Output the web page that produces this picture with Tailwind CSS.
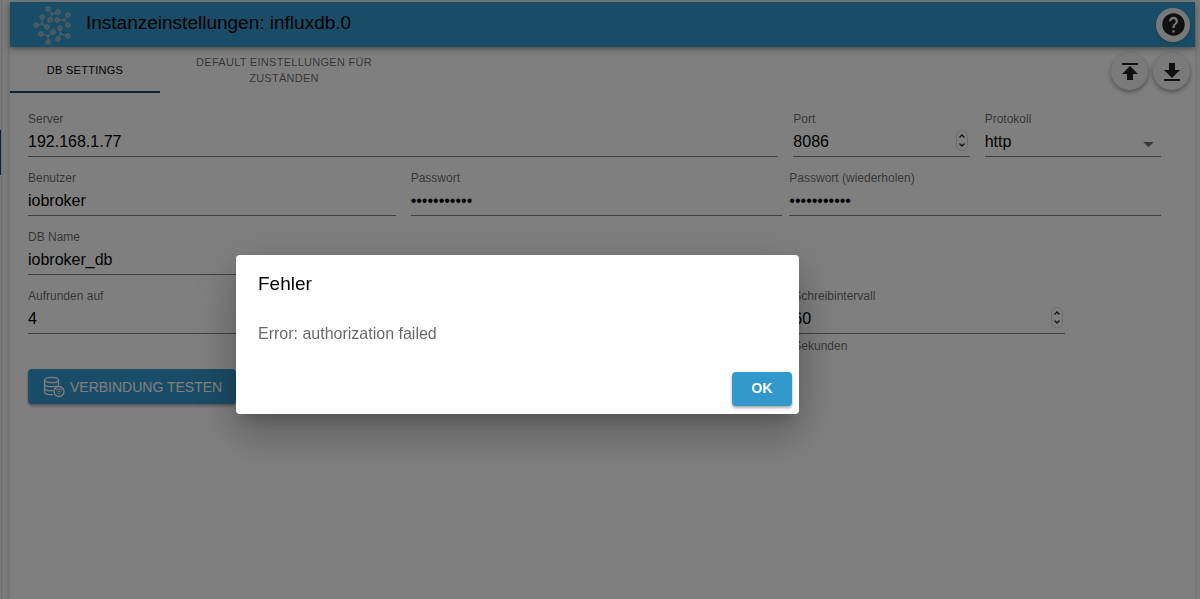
<!DOCTYPE html>
<html lang="de">
<head>
    <meta charset="UTF-8">
    <meta name="viewport" content="width=device-width, initial-scale=1.0">
    <title>Instanzeinstellungen: influxdb.0</title>
    <script src="https://cdn.jsdelivr.net/npm/@tailwindcss/browser@4"></script>
</head>
<body class="bg-[#f4f4f4] font-['Liberation_Sans',Arial,sans-serif] text-black">
    <div class="relative flex min-h-screen overflow-hidden">
        <!-- Rand der Seitenleiste -->
        <div class="w-[2px] border-r border-[#dcdcdc] pt-[130px]">
            <div class="h-[45px] w-px bg-[#164477]"></div>
        </div>

        <div class="ml-[7px] mr-[5px] mt-[2px] flex-1 border-l border-[#e4e4e4] bg-white shadow">
            <header class="flex h-[45px] items-center bg-[#3399cc] pl-5 pr-[5px] shadow-[0_2px_4px_-1px_rgba(0,0,0,0.2),0_4px_5px_rgba(0,0,0,0.14),0_1px_10px_rgba(0,0,0,0.12)]">
                <svg class="h-11 w-11" viewBox="0 0 44 44" fill="#86b3c2" stroke="#a0c4cc" stroke-width="1">
                    <path fill="none" d="M18 6l4 5 6-1M22 11l-2 6M12 14v7l-6 1M12 21l5 3M38 12l-4 5-7 0M34 17l4 5M11 31l7 2 6-4M18 33v6M29 25l2 6 7 2M31 31l-4 5"/>
                    <circle cx="18" cy="6" r="2.300"/><circle cx="28" cy="9" r="2.300"/><circle cx="20" cy="17" r="2.300"/>
                    <circle cx="12" cy="14" r="2.300"/><circle cx="6" cy="22" r="2.300"/><circle cx="17" cy="24" r="2.300"/>
                    <circle cx="38" cy="12" r="2.300"/><circle cx="27" cy="17" r="2.300"/><circle cx="38" cy="22" r="2.300"/>
                    <circle cx="11" cy="31" r="2.300"/><circle cx="23" cy="29" r="2.300"/><circle cx="18" cy="39" r="2.300"/>
                    <circle cx="30" cy="25" r="2.300"/><circle cx="38" cy="33" r="2.300"/><circle cx="28" cy="36" r="2.300"/>
                    <circle cx="22" cy="11" r="1"/><circle cx="12" cy="21" r="1"/><circle cx="34" cy="17" r="1"/><circle cx="18" cy="33" r="1"/><circle cx="31" cy="31" r="1"/>
                </svg>
                <h1 class="ml-3 flex-1 pb-[3px] text-[19px] leading-6">Instanzeinstellungen: influxdb.0</h1>
                <button type="button" aria-label="Hilfe" class="flex size-[34px] items-center justify-center rounded-full bg-[#f0f0f0] shadow-md">
                    <svg class="size-[27px]" viewBox="0 0 24 24" fill="#202020"><path d="M12 2C6.48 2 2 6.48 2 12s4.48 10 10 10 10-4.48 10-10S17.52 2 12 2zm1 17h-2v-2h2v2zm2.07-7.75l-.9.92C13.45 12.9 13 13.5 13 15h-2v-.5c0-1.1.45-2.1 1.17-2.83l1.24-1.26c.37-.36.59-.86.59-1.41 0-1.1-.9-2-2-2s-2 .9-2 2H8c0-2.21 1.79-4 4-4s4 1.79 4 4c0 .88-.36 1.68-.93 2.25z"/></svg>
                </button>
            </header>

            <div class="flex justify-between">
                <nav class="flex h-[46px] text-[11px] leading-4 tracking-wide uppercase">
                    <button type="button" class="w-[150px] border-b-2 border-[#164477] pt-[2px] uppercase">DB Settings</button>
                    <button type="button" class="w-[248px] px-6 text-black/60 uppercase">Default Einstellungen für Zuständen</button>
                </nav>
                <div class="flex gap-[5px] pr-[5px] pt-[6px]">
                    <button type="button" aria-label="Importieren" class="flex size-[37px] items-center justify-center rounded-full bg-[#f4f4f4] shadow-[0_2px_5px_rgba(0,0,0,0.4)]">
                        <svg class="size-6" viewBox="0 0 24 24" fill="#202020"><path d="M4 3h16v2H4zM4 14h5v6h6v-6h5L12 6z"/></svg>
                    </button>
                    <button type="button" aria-label="Exportieren" class="flex size-[37px] items-center justify-center rounded-full bg-[#f4f4f4] shadow-[0_2px_5px_rgba(0,0,0,0.4)]">
                        <svg class="size-6" viewBox="0 0 24 24" fill="#202020"><path d="M4 19h16v2H4zM4 10h5V3h6v7h5l-8 8z"/></svg>
                    </button>
                </div>
            </div>

            <form class="pl-[18px] pr-[34px] pt-[18px]">
                <div class="grid grid-cols-12 gap-x-[15px] gap-y-[13px]">
                    <div class="col-span-8">
                        <label for="server" class="block text-xs leading-4 text-black/60">Server</label>
                        <input id="server" type="text" value="192.168.1.77" class="block h-[30px] w-full border-b border-black/50 text-base outline-none">
                    </div>
                    <div class="relative col-span-2">
                        <label for="port" class="block text-xs leading-4 text-black/60">Port</label>
                        <input id="port" type="text" inputmode="numeric" value="8086" class="block h-[30px] w-full border-b border-black/50 text-base outline-none">
                        <svg class="absolute right-[2px] bottom-[6px] h-[21px] w-3" viewBox="0 0 12 21" fill="none"><rect x=".5" y=".5" width="11" height="20" rx="5" stroke="#d8d8d8"/><path d="M3.500 7.500L6 5l2.500 2.500M3.500 13.500L6 16l2.500-2.500" stroke="#222" stroke-width="1.300"/></svg>
                    </div>
                    <div class="relative col-span-2">
                        <label for="protokoll" class="block text-xs leading-4 text-black/60">Protokoll</label>
                        <select id="protokoll" class="block h-[30px] w-full appearance-none border-b border-black/50 text-base outline-none">
                            <option>http</option>
                            <option>https</option>
                        </select>
                        <svg class="pointer-events-none absolute right-[7px] bottom-[10px] h-[5px] w-[11px]" viewBox="0 0 11 5" fill="#000" fill-opacity=".54"><path d="M0 0h11L5.500 5z"/></svg>
                    </div>

                    <div class="col-span-4">
                        <label for="benutzer" class="block text-xs leading-4 text-black/60">Benutzer</label>
                        <input id="benutzer" type="text" value="iobroker" class="block h-[30px] w-full border-b border-black/50 text-base outline-none">
                    </div>
                    <div class="col-span-8 flex gap-[7px]">
                        <div class="flex-1">
                            <label for="passwort" class="block text-xs leading-4 text-black/60">Passwort</label>
                            <input id="passwort" type="password" value="passwort123" class="block h-[30px] w-full border-b border-black/50 text-base outline-none">
                        </div>
                        <div class="flex-1">
                            <label for="passwort2" class="block text-xs leading-4 text-black/60">Passwort (wiederholen)</label>
                            <input id="passwort2" type="password" value="passwort123" class="block h-[30px] w-full border-b border-black/50 text-base outline-none">
                        </div>
                    </div>

                    <div class="col-span-4">
                        <label for="dbname" class="block text-xs leading-4 text-black/60">DB Name</label>
                        <input id="dbname" type="text" value="iobroker_db" class="block h-[30px] w-full border-b border-black/50 text-base outline-none">
                    </div>

                    <div class="col-span-4 col-start-1">
                        <label for="runden" class="block text-xs leading-4 text-black/60">Aufrunden auf</label>
                        <input id="runden" type="text" value="4" class="block h-[30px] w-full border-b border-black/50 text-base outline-none">
                    </div>
                    <div class="relative col-span-3 col-start-9">
                        <label for="intervall" class="block text-xs leading-4 text-black/60">Schreibintervall</label>
                        <input id="intervall" type="text" inputmode="numeric" value="60" class="block h-[30px] w-full border-b border-black/50 text-base outline-none">
                        <svg class="absolute right-[2px] bottom-[26px] h-[21px] w-3" viewBox="0 0 12 21" fill="none"><rect x=".5" y=".5" width="11" height="20" rx="5" stroke="#d8d8d8"/><path d="M3.500 7.500L6 5l2.500 2.500M3.500 13.500L6 16l2.500-2.500" stroke="#222" stroke-width="1.300"/></svg>
                        <p class="mt-1 text-xs leading-4 text-black/60">Sekunden</p>
                    </div>
                </div>

                <button type="button" class="mt-[15px] flex h-[35px] items-center gap-[5px] rounded bg-[#3399cc] pr-[14px] pl-[15px] text-sm text-white uppercase shadow-[0_2px_3px_rgba(0,0,0,0.35)]">
                    <svg class="size-[22px]" viewBox="0 0 22 22" fill="none" stroke="#fff" stroke-width="1.300">
                        <ellipse cx="8.500" cy="4" rx="7" ry="2.700"/>
                        <path d="M1.500 4v12c0 1.700 3 2.700 7 2.700h1.500M15.500 4v6M1.500 8c0 1.700 3 2.700 7 2.700 2 0 4-.3 5.500-.9M1.500 12c0 1.700 3 2.700 7 2.700h1.500"/>
                        <circle cx="16" cy="15.500" r="5"/>
                        <path stroke-width="1" d="M12.800 14.300c1.800-1.700 4.600-1.700 6.400 0M14.300 16.100c1-.9 2.400-.9 3.400 0"/>
                        <circle cx="16" cy="17.800" r=".7" fill="#fff" stroke="none"/>
                    </svg>
                    Verbindung testen
                </button>
            </form>
        </div>
    </div>

    <!-- Fehlerdialog -->
    <div class="fixed inset-0 bg-black/50 pt-[255px] pl-[236px]">
        <div role="dialog" aria-labelledby="fehler" class="w-[563px] max-w-full rounded bg-white shadow-[0_11px_15px_-7px_rgba(0,0,0,0.2),0_24px_38px_3px_rgba(0,0,0,0.14),0_9px_46px_8px_rgba(0,0,0,0.12)]">
            <h2 id="fehler" class="px-[22px] pt-[15px] text-[19px] leading-7">Fehler</h2>
            <p class="px-[22px] pt-6 pb-[26px] text-base leading-6 text-black/60">Error: authorization failed</p>
            <div class="flex justify-end px-[7px] pb-2">
                <button type="button" class="h-[34px] w-[60px] rounded bg-[#3399cc] pb-[2px] text-sm font-bold text-white shadow-[0_2px_3px_rgba(0,0,0,0.35)]">OK</button>
            </div>
        </div>
    </div>
</body>
</html>
